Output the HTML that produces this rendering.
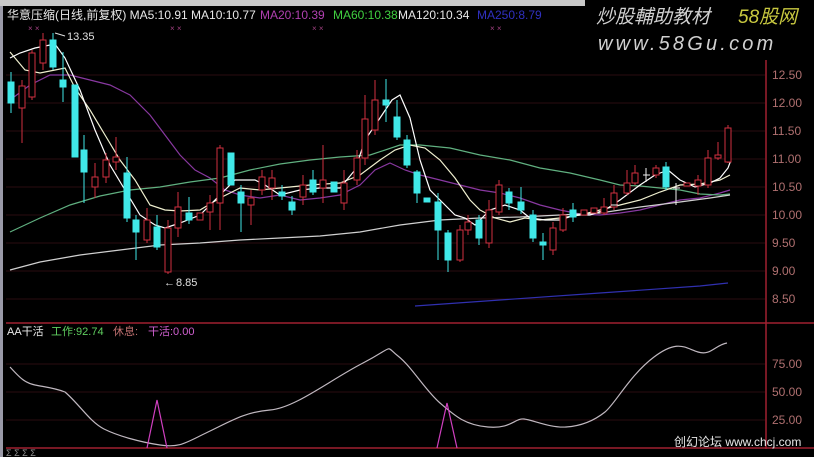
<!DOCTYPE html>
<html><head><meta charset="utf-8"><style>
html,body{margin:0;padding:0;background:#000;width:814px;height:457px;overflow:hidden}
svg{display:block}
text{font-family:"Liberation Sans","Noto Sans CJK SC",sans-serif}
</style></head><body>
<svg width="814" height="457" viewBox="0 0 814 457" xmlns="http://www.w3.org/2000/svg">
<rect width="814" height="457" fill="#000"/>
<rect x="0" y="0" width="585" height="6" fill="#c8c8c8"/>
<rect x="0" y="6" width="3" height="451" fill="#9a9aa8"/>
<g stroke="#2a0c10" stroke-width="1">
<line x1="6" y1="75" x2="765" y2="75"/><line x1="6" y1="103" x2="765" y2="103"/><line x1="6" y1="131" x2="765" y2="131"/><line x1="6" y1="159" x2="765" y2="159"/><line x1="6" y1="187" x2="765" y2="187"/><line x1="6" y1="215" x2="765" y2="215"/><line x1="6" y1="243" x2="765" y2="243"/><line x1="6" y1="271" x2="765" y2="271"/><line x1="6" y1="299" x2="765" y2="299"/>
<line x1="6" y1="364" x2="765" y2="364"/><line x1="6" y1="392" x2="765" y2="392"/><line x1="6" y1="420" x2="765" y2="420"/>
</g>
<line x1="6" y1="323" x2="814" y2="323" stroke="#a02030" stroke-width="1.5"/>
<line x1="6" y1="448" x2="814" y2="448" stroke="#a02030" stroke-width="1.5"/>
<line x1="766" y1="60" x2="766" y2="449" stroke="#a02030" stroke-width="1.5"/>
<g fill="#b07070" font-size="12">
<text x="772" y="79">12.50</text><text x="772" y="107">12.00</text><text x="772" y="135">11.50</text><text x="772" y="163">11.00</text><text x="772" y="191">10.50</text><text x="772" y="219">10.00</text><text x="772" y="247">9.50</text><text x="772" y="275">9.00</text><text x="772" y="303">8.50</text>
<text x="772" y="368">75.00</text><text x="772" y="396">50.00</text><text x="772" y="424">25.00</text>
</g>
<text x="7" y="19" font-size="12" fill="#e8e8e8">华意压缩(日线,前复权) MA5:10.91  MA10:10.77</text>
<text x="260" y="19" font-size="12" fill="#b040b0">MA20:10.39</text>
<text x="333" y="19" font-size="12" fill="#40d040">MA60:10.38</text>
<text x="398" y="19" font-size="12" fill="#e8e8e8">MA120:10.34</text>
<text x="477" y="19" font-size="12" fill="#3030c0">MA250:8.79</text>
<g fill="#a04080" font-size="8"><text x="28" y="31">× ×</text><text x="170" y="31">× ×</text><text x="312" y="31">× ×</text><text x="490" y="31">× ×</text></g>
<text x="596" y="23" font-size="19" fill="#d0d0d0" font-style="italic">炒股輔助教材</text>
<text x="738" y="23" font-size="19" fill="#c8c840" font-style="italic">58股网</text>
<text x="598" y="50" font-size="20" fill="#d0d0d0" font-style="italic" letter-spacing="3.2">www.58Gu.com</text>
<g fill="none" stroke-width="1.2">
<polyline stroke="#8838a0" points="10,100 30,85 50,75 70,75 90,80 110,85 130,95 150,115 165,135 180,155 195,170 210,178 225,190 240,195 260,198 280,195 300,200 320,198 340,195 360,185 375,170 390,163 405,170 420,175 440,180 460,185 480,190 500,193 520,198 540,205 560,210 580,214 600,215 620,213 640,210 660,205 680,200 700,198 720,193 730,190"/>
<polyline stroke="#60b080" points="10,232 40,218 70,205 100,196 130,190 160,187 190,182 220,178 250,170 280,164 310,160 340,157 370,155 400,145 420,145 450,148 480,155 510,160 540,168 570,173 600,180 620,185 640,186 660,188 680,190 700,194 720,195 730,194"/>
<polyline stroke="#d0d0d0" points="10,270 40,262 80,255 120,250 160,245 200,243 240,240 280,238 320,236 360,232 400,225 440,220 480,218 520,217 560,215 600,213 640,207 680,202 710,198 730,195"/>
<polyline stroke="#3030b0" points="415,306 500,300 600,293 700,286 728,283"/>
<polyline stroke="#f0f0d0" points="10,52 25,70 40,73 55,70 65,68 75,88 90,110 105,135 120,160 135,180 150,205 165,210 180,211 200,210 220,198 240,188 260,190 280,188 310,185 340,183 360,175 380,160 395,150 410,145 425,148 440,160 455,178 470,200 480,210 495,218 510,222 525,218 540,220 560,218 580,215 600,210 620,205 640,200 660,192 680,185 700,184 720,180 730,175"/>
<polyline stroke="#ffffff" points="10,58 20,53 35,48 45,46 55,44 65,58 80,90 95,130 110,165 125,190 140,215 155,225 165,228 180,223 200,215 210,205 220,195 235,180 255,180 265,185 280,195 300,190 320,188 340,188 355,170 365,140 380,118 392,100 400,95 410,118 420,160 430,190 440,200 455,215 465,218 475,225 490,210 505,205 520,210 530,218 545,220 560,220 575,215 590,215 605,210 620,200 640,185 655,175 668,170 680,180 695,187 710,183 720,178 728,168 731,160"/>
</g>
<g stroke-width="1">
<g stroke="#d03040" fill="#000">
<line x1="22" y1="80" x2="22" y2="143"/><rect x="19" y="86" width="6" height="22"/>
<line x1="32" y1="50" x2="32" y2="100"/><rect x="29" y="53" width="6" height="44"/>
<line x1="43" y1="33" x2="43" y2="70"/><rect x="40" y="40" width="6" height="23"/>
<line x1="95" y1="163" x2="95" y2="198"/><rect x="92" y="177" width="6" height="10"/>
<line x1="106" y1="153" x2="106" y2="183"/><rect x="103" y="160" width="6" height="17"/>
<line x1="116" y1="137" x2="116" y2="170"/><rect x="113" y="157" width="6" height="5"/>
<line x1="147" y1="208" x2="147" y2="243"/><rect x="144" y="220" width="6" height="20"/>
<line x1="168" y1="220" x2="168" y2="274"/><rect x="165" y="228" width="6" height="44"/>
<line x1="178" y1="192" x2="178" y2="237"/><rect x="175" y="207" width="6" height="21"/>
<rect x="197" y="213" width="6" height="7"/>
<line x1="210" y1="195" x2="210" y2="230"/><rect x="207" y="203" width="6" height="9"/>
<line x1="220" y1="145" x2="220" y2="230"/><rect x="217" y="148" width="6" height="55"/>
<line x1="251" y1="190" x2="251" y2="225"/><rect x="248" y="198" width="6" height="7"/>
<line x1="262" y1="170" x2="262" y2="195"/><rect x="259" y="177" width="6" height="13"/>
<line x1="272" y1="170" x2="272" y2="200"/><rect x="269" y="178" width="6" height="10"/>
<line x1="303" y1="175" x2="303" y2="205"/><rect x="300" y="185" width="6" height="12"/>
<line x1="323" y1="145" x2="323" y2="203"/><rect x="320" y="180" width="6" height="8"/>
<line x1="344" y1="170" x2="344" y2="210"/><rect x="341" y="183" width="6" height="20"/>
<line x1="357" y1="150" x2="357" y2="185"/><rect x="354" y="158" width="6" height="22"/>
<line x1="365" y1="95" x2="365" y2="165"/><rect x="362" y="119" width="6" height="39"/>
<line x1="375" y1="80" x2="375" y2="135"/><rect x="372" y="100" width="6" height="30"/>
<line x1="460" y1="225" x2="460" y2="262"/><rect x="457" y="230" width="6" height="30"/>
<line x1="468" y1="215" x2="468" y2="235"/><rect x="465" y="222" width="6" height="8"/>
<line x1="489" y1="200" x2="489" y2="248"/><rect x="486" y="210" width="6" height="33"/>
<line x1="499" y1="180" x2="499" y2="215"/><rect x="496" y="185" width="6" height="27"/>
<line x1="553" y1="222" x2="553" y2="255"/><rect x="550" y="228" width="6" height="22"/>
<line x1="563" y1="208" x2="563" y2="232"/><rect x="560" y="215" width="6" height="15"/>
<rect x="581" y="210" width="6" height="5"/>
<rect x="591" y="208" width="6" height="5"/>
<line x1="604" y1="198" x2="604" y2="215"/><rect x="601" y="207" width="6" height="6"/>
<line x1="614" y1="185" x2="614" y2="210"/><rect x="611" y="193" width="6" height="14"/>
<line x1="627" y1="170" x2="627" y2="195"/><rect x="624" y="183" width="6" height="10"/>
<line x1="635" y1="165" x2="635" y2="185"/><rect x="632" y="173" width="6" height="10"/>
<line x1="656" y1="165" x2="656" y2="178"/><rect x="653" y="168" width="6" height="7"/>
<rect x="684" y="183" width="6" height="3"/>
<line x1="698" y1="175" x2="698" y2="195"/><rect x="695" y="180" width="6" height="6"/>
<line x1="708" y1="150" x2="708" y2="188"/><rect x="705" y="158" width="6" height="27"/>
<line x1="718" y1="142" x2="718" y2="160"/><rect x="715" y="155" width="6" height="3"/>
<line x1="728" y1="125" x2="728" y2="163"/><rect x="725" y="128" width="6" height="34"/>
</g>
<g stroke="#40e8e8" fill="#40e8e8">
<line x1="11" y1="72" x2="11" y2="113"/><rect x="8" y="82" width="6" height="21"/>
<line x1="53" y1="33" x2="53" y2="70"/><rect x="50" y="40" width="6" height="27"/>
<line x1="63" y1="52" x2="63" y2="102"/><rect x="60" y="80" width="6" height="7"/>
<rect x="72" y="85" width="6" height="72"/>
<line x1="84" y1="135" x2="84" y2="203"/><rect x="81" y="150" width="6" height="22"/>
<line x1="127" y1="157" x2="127" y2="222"/><rect x="124" y="173" width="6" height="45"/>
<line x1="136" y1="215" x2="136" y2="260"/><rect x="133" y="220" width="6" height="12"/>
<line x1="157" y1="215" x2="157" y2="250"/><rect x="154" y="227" width="6" height="20"/>
<line x1="189" y1="197" x2="189" y2="224"/><rect x="186" y="213" width="6" height="7"/>
<rect x="228" y="153" width="6" height="32"/>
<line x1="241" y1="185" x2="241" y2="232"/><rect x="238" y="192" width="6" height="11"/>
<line x1="282" y1="185" x2="282" y2="200"/><rect x="279" y="192" width="6" height="4"/>
<line x1="292" y1="196" x2="292" y2="215"/><rect x="289" y="202" width="6" height="8"/>
<line x1="313" y1="170" x2="313" y2="195"/><rect x="310" y="180" width="6" height="12"/>
<rect x="331" y="182" width="6" height="10"/>
<line x1="386" y1="79" x2="386" y2="122"/><rect x="383" y="100" width="6" height="5"/>
<line x1="397" y1="100" x2="397" y2="140"/><rect x="394" y="117" width="6" height="20"/>
<line x1="407" y1="135" x2="407" y2="168"/><rect x="404" y="140" width="6" height="25"/>
<line x1="417" y1="170" x2="417" y2="203"/><rect x="414" y="172" width="6" height="21"/>
<rect x="424" y="198" width="6" height="4"/>
<line x1="438" y1="193" x2="438" y2="260"/><rect x="435" y="202" width="6" height="28"/>
<line x1="448" y1="230" x2="448" y2="272"/><rect x="445" y="233" width="6" height="27"/>
<line x1="479" y1="215" x2="479" y2="245"/><rect x="476" y="220" width="6" height="18"/>
<line x1="509" y1="188" x2="509" y2="210"/><rect x="506" y="192" width="6" height="11"/>
<line x1="521" y1="187" x2="521" y2="214"/><rect x="518" y="202" width="6" height="8"/>
<line x1="533" y1="210" x2="533" y2="242"/><rect x="530" y="215" width="6" height="23"/>
<line x1="543" y1="233" x2="543" y2="260"/><rect x="540" y="242" width="6" height="3"/>
<line x1="573" y1="203" x2="573" y2="222"/><rect x="570" y="210" width="6" height="7"/>
<line x1="666" y1="162" x2="666" y2="190"/><rect x="663" y="167" width="6" height="20"/>
</g>
<g stroke="#f0f0f0"><line x1="643" y1="175" x2="650" y2="175"/><line x1="646" y1="168" x2="646" y2="182"/><line x1="673" y1="188" x2="680" y2="188"/><line x1="676" y1="183" x2="676" y2="205"/><line x1="611" y1="205" x2="618" y2="205"/></g>
</g>
<text x="67" y="40" font-size="11" fill="#e0e0e0">13.35</text>
<line x1="55" y1="33" x2="65" y2="36" stroke="#e0e0e0"/>
<text x="176" y="286" font-size="11" fill="#e0e0e0">8.85</text>
<text x="164" y="286" font-size="11" fill="#e0e0e0">←</text>
<text x="7" y="335" font-size="11" fill="#e8e8e8">AA干活</text>
<text x="51" y="335" font-size="11" fill="#60d060">工作:92.74</text>
<text x="113" y="335" font-size="11" fill="#c07070">休息:</text>
<text x="148" y="335" font-size="11" fill="#d060d0">干活:0.00</text>
<path fill="none" stroke="#c0b8c0" stroke-width="1.2" d="M10,367 C20,378 25,383 35,385 S55,388 65,392 C80,405 90,422 104,429 S140,442 160,445 S185,443 208,432 S245,412 270,410 S330,380 363,363 S384,345 398,356 S425,390 440,403 S465,425 488,427 S515,418 524,419 S550,428 566,427 S595,420 605,412 S630,375 654,357 S685,348 698,352 S715,345 727,343"/>
<polyline fill="none" stroke="#d040c0" stroke-width="1.2" points="147,448 157,400 167,448"/>
<polyline fill="none" stroke="#d040c0" stroke-width="1.2" points="437,448 447,403 457,448"/>
<text x="674" y="446" font-size="12" fill="#e8e8e8">创幻论坛 www.chcj.com</text>
<text x="6" y="456" font-size="9" fill="#909090">Σ Σ Σ Σ</text>
</svg>
</body></html>
